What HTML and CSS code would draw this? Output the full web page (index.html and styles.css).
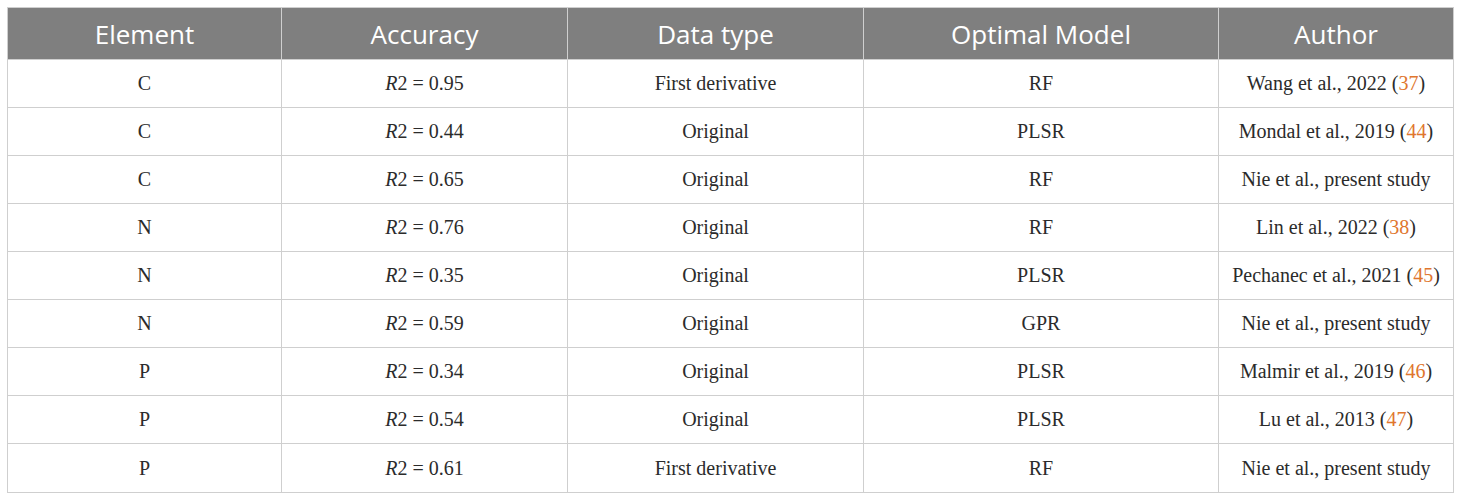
FILE: index.html
```html
<!DOCTYPE html>
<html>
<head>
<meta charset="utf-8">
<link rel="stylesheet" href="styles.css">
</head>
<body>
<table class="data">
  <colgroup>
    <col class="c1"><col class="c2"><col class="c3"><col class="c4"><col class="c5">
  </colgroup>
  <thead>
    <tr><th>Element</th><th>Accuracy</th><th>Data type</th><th>Optimal Model</th><th>Author</th></tr>
  </thead>
  <tbody>
    <tr><td>C</td><td><i>R</i>2 = 0.95</td><td>First derivative</td><td>RF</td><td>Wang et al., 2022 (<span class="ref">37</span>)</td></tr>
    <tr><td>C</td><td><i>R</i>2 = 0.44</td><td>Original</td><td>PLSR</td><td>Mondal et al., 2019 (<span class="ref">44</span>)</td></tr>
    <tr><td>C</td><td><i>R</i>2 = 0.65</td><td>Original</td><td>RF</td><td>Nie et al., present study</td></tr>
    <tr><td>N</td><td><i>R</i>2 = 0.76</td><td>Original</td><td>RF</td><td>Lin et al., 2022 (<span class="ref">38</span>)</td></tr>
    <tr><td>N</td><td><i>R</i>2 = 0.35</td><td>Original</td><td>PLSR</td><td>Pechanec et al., 2021 (<span class="ref">45</span>)</td></tr>
    <tr><td>N</td><td><i>R</i>2 = 0.59</td><td>Original</td><td>GPR</td><td>Nie et al., present study</td></tr>
    <tr><td>P</td><td><i>R</i>2 = 0.34</td><td>Original</td><td>PLSR</td><td>Malmir et al., 2019 (<span class="ref">46</span>)</td></tr>
    <tr><td>P</td><td><i>R</i>2 = 0.54</td><td>Original</td><td>PLSR</td><td>Lu et al., 2013 (<span class="ref">47</span>)</td></tr>
    <tr><td>P</td><td><i>R</i>2 = 0.61</td><td>First derivative</td><td>RF</td><td>Nie et al., present study</td></tr>
  </tbody>
</table>
</body>
</html>
```
FILE: styles.css
```css
html, body {
  margin: 0;
  padding: 0;
  background: #ffffff;
}
body {
  padding: 7px 0 0 7px;
}
.data {
  border-collapse: collapse;
  table-layout: fixed;
  width: 1446px;
  border: 1px solid #cfcfcf;
}
.c1 { width: 274px; }
.c2 { width: 286px; }
.c3 { width: 296px; }
.c4 { width: 355px; }
.c5 { width: 235px; }
.data th {
  background: #7f7f7f;
  color: #ffffff;
  font-family: "Open Sans", "Noto Sans", sans-serif;
  font-weight: 400;
  font-size: 26px;
  height: 51px;
  padding: 0 4px;
  text-align: center;
  border-left: 1px solid #cfcfcf;
  border-right: 1px solid #cfcfcf;
  border-bottom: 1px solid #cfcfcf;
}
.data td {
  font-family: "Liberation Serif", "Times New Roman", serif;
  font-size: 20px;
  color: #2b2b2b;
  text-align: center;
  height: 47px;
  padding: 0 2px;
  border: 1px solid #cfcfcf;
  white-space: nowrap;
}
.data tbody tr:last-child td {
  height: 48px;
}
.ref {
  color: #e0762e;
}
```
